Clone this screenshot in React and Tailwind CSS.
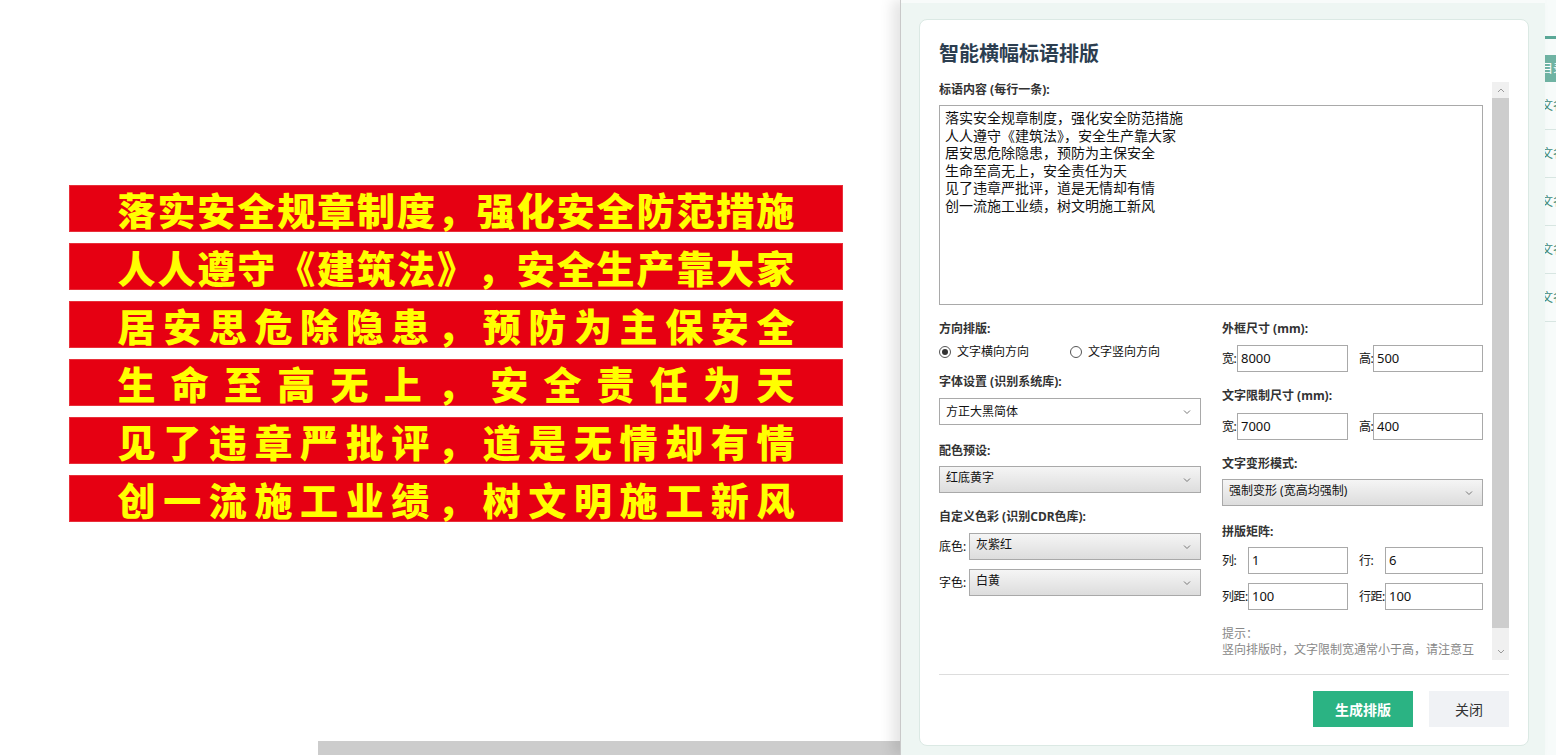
import React from "react";

const slogans = [
    "落实安全规章制度，强化安全防范措施",
    "人人遵守《建筑法》，安全生产靠大家",
    "居安思危除隐患，预防为主保安全",
    "生命至高无上，安全责任为天",
    "见了违章严批评，道是无情却有情",
    "创一流施工业绩，树文明施工新风",
];

const Chevron = () => (
    <svg width="8" height="6" viewBox="0 0 8 6" className="shrink-0">
        <path d="M1 1.5 L4 4.5 L7 1.5" fill="none" stroke="#777" strokeWidth="1" />
    </svg>
);

const Select = ({ value, gray, className = "" }) => (
    <div
        className={`h-[27px] flex items-center justify-between pl-[6px] pr-[9px] border border-[#a9a9a9] text-[12px] text-[#111] ${gray ? "bg-linear-to-b from-[#f5f5f5] to-[#dddddd]" : "bg-white"} ${className}`}
    >
        <span className={gray ? "-mt-[3px]" : ""}>{value}</span>
        <Chevron />
    </div>
);

const Input = ({ value }) => (
    <div className="flex-1 min-w-0 h-[27px] flex items-center pl-[3px] border border-[#a9a9a9] bg-white text-[13px] text-[#111]">
        {value}
    </div>
);

const Field = ({ label, value, w }) => (
    <div className="flex items-center text-[12px] text-[#111]">
        <span className={`${w} shrink-0 whitespace-nowrap tracking-[-0.5px]`}>{label}</span>
        <Input value={value} />
    </div>
);

const Label = ({ children, className = "" }) => (
    <div className={`text-[12px] leading-[16px] font-bold text-[#333] ${className}`}>{children}</div>
);

const Radio = ({ checked, text }) => (
    <div className="flex items-center gap-[6px] text-[12px] text-[#111]">
        <span className="w-[12px] h-[12px] rounded-full border border-[#555] bg-white flex items-center justify-center">
            {checked && <span className="w-[6px] h-[6px] rounded-full bg-[#333]" />}
        </span>
        {text}
    </div>
);

const Banner = ({ text }) => (
    <div className="w-[774px] h-[47px] bg-[#e60012] border border-[#e8303a] flex items-center justify-center">
        <div className="w-[677px] flex justify-between text-[38px] leading-none font-black text-[#ffff00]">
            {text.split("").map((c, i) => (
                <span key={i}>{c}</span>
            ))}
        </div>
    </div>
);

const App = () => {
    return <div className="w-[1556px] h-[755px] overflow-hidden flex bg-white font-['Noto_Sans','Noto_Sans_CJK_SC',sans-serif]">
        {/* canvas */}
        <div className="w-[900px] shrink-0 h-full flex flex-col font-['Noto_Sans_CJK_SC',sans-serif]">
            <div className="pt-[185px] pl-[69px] flex flex-col gap-[11px]">
                {slogans.map((s) => <Banner key={s} text={s} />)}
            </div>
            <div className="mt-auto ml-[318px] h-[14px] bg-[#cccccc]" />
        </div>

        {/* dialog panel */}
        <div className="w-[645px] shrink-0 h-full bg-[#eef6f3] border-l border-[#c9c9c9] shadow-[-8px_0_12px_rgba(0,0,0,0.10)] relative z-10 flex flex-col">
            <div className="h-[3px] bg-[#f8fbfa]" />
            <div className="ml-[18px] mt-[16px] w-[610px] h-[727px] bg-white rounded-[8px] border border-[#dbe9e4] px-[19px] pt-[19px] flex flex-col">
                <h2 className="text-[20px] leading-[28px] font-bold text-[#2c3e50] font-['Noto_Sans_CJK_SC',sans-serif]">智能横幅标语排版</h2>

                <div className="mt-[15px] h-[578px] flex overflow-hidden">
                    <div className="w-[553px] h-[574px] pr-[9px] overflow-hidden">
                        <Label>标语内容 (每行一条):</Label>
                        <div className="mt-[7px] h-[200px] border border-[#a9a9a9] px-[5px] pt-[3px] text-[14px] leading-[17.6px] text-[#111] font-['Noto_Sans_CJK_SC',sans-serif]">
                            {slogans.map((s) => <div key={s}>{s}</div>)}
                        </div>

                        <div className="mt-[16px] grid grid-cols-[262px_261px] gap-x-[21px]">
                            <div>
                                <Label>方向排版:</Label>
                                <div className="mt-[7px] h-[16px] flex items-center">
                                    <div className="w-[131px]"><Radio checked text="文字横向方向" /></div>
                                    <Radio text="文字竖向方向" />
                                </div>
                                <Label className="mt-[14px]">字体设置 (识别系统库):</Label>
                                <Select value="方正大黑简体" className="mt-[8px]" />
                                <Label className="mt-[18px]">配色预设:</Label>
                                <Select value="红底黄字" gray className="mt-[7px]" />
                                <Label className="mt-[16px]">自定义色彩 (识别CDR色库):</Label>
                                <div className="mt-[8px] flex items-center">
                                    <span className="w-[30px] shrink-0 text-[12px] text-[#111]">底色:</span>
                                    <Select value="灰紫红" gray className="flex-1" />
                                </div>
                                <div className="mt-[9px] flex items-center">
                                    <span className="w-[30px] shrink-0 text-[12px] text-[#111]">字色:</span>
                                    <Select value="白黄" gray className="flex-1" />
                                </div>
                            </div>

                            <div>
                                <Label>外框尺寸 (mm):</Label>
                                <div className="mt-[8px] grid grid-cols-[126px_124px] gap-x-[11px]">
                                    <Field label="宽:" value="8000" w="w-[15px]" />
                                    <Field label="高:" value="500" w="w-[14px]" />
                                </div>
                                <Label className="mt-[16px]">文字限制尺寸 (mm):</Label>
                                <div className="mt-[9px] grid grid-cols-[126px_124px] gap-x-[11px]">
                                    <Field label="宽:" value="7000" w="w-[15px]" />
                                    <Field label="高:" value="400" w="w-[14px]" />
                                </div>
                                <Label className="mt-[16px]">文字变形模式:</Label>
                                <Select value="强制变形 (宽高均强制)" gray className="mt-[7px]" />
                                <Label className="mt-[18px]">拼版矩阵:</Label>
                                <div className="mt-[7px] grid grid-cols-[126px_124px] gap-x-[11px]">
                                    <Field label="列:" value="1" w="w-[26px]" />
                                    <Field label="行:" value="6" w="w-[26px]" />
                                </div>
                                <div className="mt-[9px] grid grid-cols-[126px_124px] gap-x-[11px]">
                                    <Field label="列距:" value="100" w="w-[26px]" />
                                    <Field label="行距:" value="100" w="w-[26px]" />
                                </div>
                                <div className="mt-[16px] text-[12px] leading-[16px] text-[#888]">
                                    <div>提示：</div>
                                    <div>竖向排版时，文字限制宽通常小于高，请注意互换宽高数值。</div>
                                </div>
                            </div>
                        </div>
                    </div>

                    {/* scrollbar */}
                    <div className="w-[17px] h-full flex flex-col bg-[#f0f0f0]">
                        <div className="h-[16px] flex items-center justify-center">
                            <svg width="8" height="5" viewBox="0 0 8 5"><path d="M1 4 L4 1 L7 4" fill="none" stroke="#999" strokeWidth="1" /></svg>
                        </div>
                        <div className="h-[530px] bg-[#cdcdcd]" />
                        <div className="flex-1" />
                        <div className="h-[18px] flex items-center justify-center">
                            <svg width="8" height="5" viewBox="0 0 8 5"><path d="M1 1 L4 4 L7 1" fill="none" stroke="#999" strokeWidth="1" /></svg>
                        </div>
                    </div>
                </div>

                <div className="mt-[14px] border-t border-[#dddddd]" />
                <div className="pt-[16px] flex justify-end gap-[16px]">
                    <button className="w-[100px] h-[36px] bg-[#2bb383] text-white text-[14px] font-bold">生成排版</button>
                    <button className="w-[80px] h-[36px] bg-[#f0f2f5] text-[#333] text-[14px]">关闭</button>
                </div>
            </div>
        </div>

        {/* background app peeking out */}
        <div className="flex-1 h-full bg-[#f7fbfa] flex flex-col overflow-hidden">
            <div className="mt-[36px] h-[3px] bg-[#5aa897]" />
            <div className="mt-[16px] h-[27px] bg-[#6fb3a3] text-white text-[12px] leading-[27px] whitespace-nowrap -ml-[4px]">目录</div>
            {[0, 1, 2, 3, 4].map((i) => (
                <div key={i} className="h-[48px] border-b border-[#d8e6e2] flex items-center text-[12px] text-[#3d8b7a] whitespace-nowrap -ml-[4px]">
                    文名
                </div>
            ))}
        </div>
    </div>
}

export default App
